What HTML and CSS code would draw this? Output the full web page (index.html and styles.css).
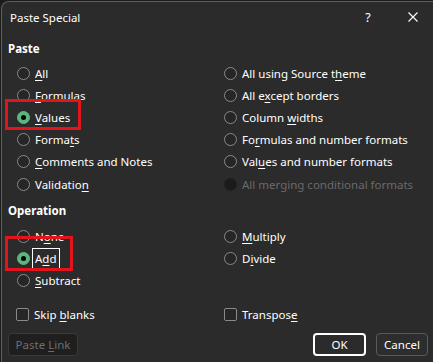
FILE: index.html
```html
<!DOCTYPE html>
<html>
<head>
<meta charset="utf-8">
<link rel="stylesheet" href="styles.css">
</head>
<body>
<div class="dialog">
  <div class="titlebar">
    <span class="title">Paste Special</span>
    <span class="help">?</span>
    <span class="close"><svg width="10" height="10" viewBox="0 0 10 10"><path d="M0.5 0.5 L9.5 9.5 M9.5 0.5 L0.5 9.5" stroke="#ffffff" stroke-width="1.1" fill="none"/></svg></span>
  </div>

  <div class="section-title">Paste</div>
  <div class="cols paste">
    <div class="col">
      <div class="opt"><span class="radio"></span><span><u>A</u>ll</span></div>
      <div class="opt"><span class="radio"></span><span><u>F</u>ormulas</span></div>
      <div class="opt mark mark-values"><span class="radio on"></span><span><u>V</u>alues</span></div>
      <div class="opt"><span class="radio"></span><span>Forma<u>t</u>s</span></div>
      <div class="opt"><span class="radio"></span><span><u>C</u>omments and Notes</span></div>
      <div class="opt"><span class="radio"></span><span>Validatio<u>n</u></span></div>
    </div>
    <div class="col">
      <div class="opt"><span class="radio"></span><span>All using Source t<u>h</u>eme</span></div>
      <div class="opt"><span class="radio"></span><span>All e<u>x</u>cept borders</span></div>
      <div class="opt"><span class="radio"></span><span>Column <u>w</u>idths</span></div>
      <div class="opt"><span class="radio"></span><span>Fo<u>r</u>mulas and number formats</span></div>
      <div class="opt"><span class="radio"></span><span>Val<u>u</u>es and number formats</span></div>
      <div class="opt disabled"><span class="radio"></span><span>All mer<u>g</u>ing conditional formats</span></div>
    </div>
  </div>

  <div class="section-title op-title">Operation</div>
  <div class="cols operation">
    <div class="col">
      <div class="opt"><span class="radio"></span><span>N<u>o</u>ne</span></div>
      <div class="opt mark mark-add"><span class="radio on"></span><span class="focus">A<u>d</u>d</span></div>
      <div class="opt"><span class="radio"></span><span><u>S</u>ubtract</span></div>
    </div>
    <div class="col">
      <div class="opt"><span class="radio"></span><span><u>M</u>ultiply</span></div>
      <div class="opt"><span class="radio"></span><span>D<u>i</u>vide</span></div>
    </div>
  </div>

  <div class="checks">
    <div class="check"><span class="box"></span><span>Skip <u>b</u>lanks</span></div>
    <div class="check"><span class="box"></span><span>Transpos<u>e</u></span></div>
  </div>

  <div class="buttons">
    <button class="btn btn-disabled" disabled>Paste <u>L</u>ink</button>
    <button class="btn btn-ok">OK</button>
    <button class="btn btn-cancel">Cancel</button>
  </div>
</div>
</body>
</html>
```

FILE: styles.css
```css
html, body {
  margin: 0;
  padding: 0;
}
body {
  width: 433px;
  height: 362px;
  overflow: hidden;
  background: #1c1c1c;
  font-family: "Noto Sans", "Open Sans", sans-serif;
  font-size: 11.5px;
  color: #ffffff;
}
u {
  text-decoration: underline;
  text-underline-offset: 2px;
}
.dialog {
  margin: 1px 0 0 1px;
  height: 361px;
  box-sizing: border-box;
  background: #2b2b2b;
  border-top: 1px solid #5e5e5e;
  border-left: 1px solid #5e5e5e;
  border-top-left-radius: 8px;
}
.titlebar {
  display: flex;
  align-items: center;
  height: 30px;
  padding-left: 8px;
}
.title {
  flex: 1;
}
.help {
  width: 50px;
  text-align: center;
  font-size: 12.5px;
}
.close {
  width: 40px;
  display: flex;
  justify-content: center;
  align-items: center;
}
.section-title {
  font-weight: bold;
  line-height: 18px;
  padding-left: 6px;
  margin-top: 8px;
}
.op-title {
  margin-top: 7px;
}
.cols {
  display: flex;
  padding-left: 15px;
  margin-top: 4px;
}
.paste .opt {
  height: 22.2px;
}
.operation {
  margin-top: 5px;
}
.col {
  width: 207px;
  display: flex;
  flex-direction: column;
}
.opt {
  position: relative;
  display: flex;
  align-items: center;
  gap: 5px;
  height: 22px;
  white-space: nowrap;
}
.radio {
  position: relative;
  flex: none;
  width: 13px;
  height: 13px;
  box-sizing: border-box;
  border: 1px solid #8a8a8a;
  border-radius: 50%;
  background: #262626;
}
.radio.on {
  background: #5cb67b;
  border-color: #5cb67b;
}
.radio.on::after {
  content: "";
  position: absolute;
  inset: 3px;
  border-radius: 50%;
  background: #000000;
}
.disabled {
  color: #6a6a6a;
}
.disabled .radio {
  background: #1b1b1b;
  border-color: #1f1f1f;
}
.mark::after {
  content: "";
  position: absolute;
  border: 3px solid #e3141b;
  box-sizing: border-box;
  pointer-events: none;
}
.mark-values::after {
  left: -12px;
  top: -7px;
  width: 76px;
  height: 31px;
}
.mark-add::after {
  left: -12px;
  top: -11px;
  width: 68px;
  height: 35px;
}
.focus {
  display: inline-block;
  border: 1px solid #ffffff;
  padding: 1px 2px;
  margin: 0 -3px;
  line-height: 17px;
}
.checks {
  display: flex;
  padding-left: 14px;
  margin-top: 12px;
}
.check {
  width: 208px;
  height: 22px;
  display: flex;
  align-items: center;
  gap: 5px;
}
.box {
  flex: none;
  width: 13px;
  height: 13px;
  box-sizing: border-box;
  border: 1px solid #8a8a8a;
  border-radius: 2px;
  background: #262626;
}
.buttons {
  display: flex;
  margin-top: 8px;
  padding: 0 5px 0 6px;
  gap: 10px;
}
.btn {
  height: 23px;
  box-sizing: border-box;
  font-family: inherit;
  font-size: 11.5px;
  color: #ffffff;
  background: #2d2d2d;
  border: 1px solid #5a5a5a;
  border-radius: 4px;
  padding: 0;
}
.btn-disabled {
  width: 70px;
  background: #1f1f1f;
  border-color: #3a3a3a;
  color: #6e6e6e;
}
.btn-ok {
  width: 53px;
  margin-left: auto;
  border: 2px solid #ffffff;
  background: #2b2b2b;
}
.btn-cancel {
  width: 52px;
}
```
